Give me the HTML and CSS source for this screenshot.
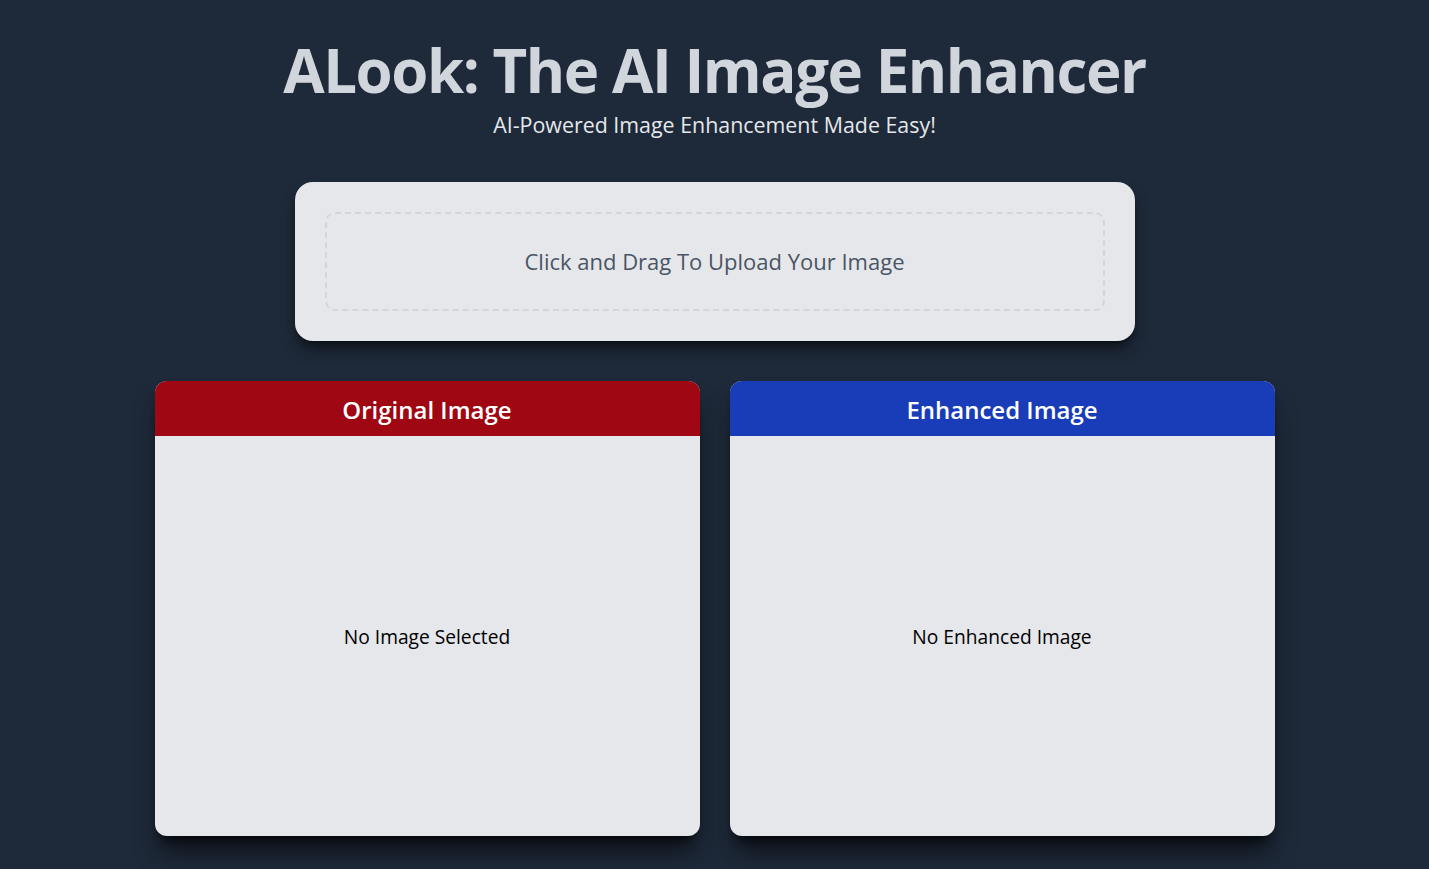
FILE: index.html
```html
<!DOCTYPE html>
<html lang="en">
<head>
<meta charset="utf-8">
<title>ALook: The AI Image Enhancer</title>
<link rel="stylesheet" href="styles.css">
</head>
<body>
<main class="page">
  <header class="hero">
    <h1 class="title">ALook: The AI Image Enhancer</h1>
    <p class="subtitle">AI-Powered Image Enhancement Made Easy!</p>
  </header>

  <section class="upload">
    <label class="dropzone">
      <span class="dropzone-text">Click and Drag To Upload Your Image</span>
    </label>
  </section>

  <section class="previews">
    <div class="card">
      <div class="card-head card-head--red">Original Image</div>
      <div class="card-body">No Image Selected</div>
    </div>
    <div class="card">
      <div class="card-head card-head--blue">Enhanced Image</div>
      <div class="card-body">No Enhanced Image</div>
    </div>
  </section>
</main>
</body>
</html>
```
FILE: styles.css
```css
* { box-sizing: border-box; }

html, body {
  margin: 0;
  padding: 0;
}

body {
  background: #1e2939;
  min-height: 100vh;
  font-family: "Open Sans", "Noto Sans", "Liberation Sans", sans-serif;
}

.page {
  display: flex;
  flex-direction: column;
  align-items: center;
  padding-top: 40px;
}

.hero {
  text-align: center;
}

.title {
  margin: 0;
  font-size: 60px;
  line-height: 60px;
  font-weight: 700;
  color: #d1d5dc;
  letter-spacing: -1.45px;
}

.subtitle {
  margin: 11px 0 0;
  font-size: 21.4px;
  line-height: 28px;
  color: #e5e7eb;
}

.upload {
  margin-top: 43px;
  width: 840px;
  background: #e5e7eb;
  border-radius: 18px;
  padding: 30px;
  box-shadow: 0 10px 15px -3px rgba(0,0,0,0.55), 0 4px 6px -4px rgba(0,0,0,0.55);
}

.dropzone {
  display: flex;
  align-items: center;
  justify-content: center;
  height: 99px;
  padding-bottom: 2px;
  border: 2px dashed #d1d5dc;
  border-radius: 10px;
  cursor: pointer;
}

.dropzone-text {
  font-size: 22px;
  color: #4a5565;
}

.previews {
  margin-top: 40px;
  display: grid;
  grid-template-columns: 545px 545px;
  gap: 30px;
}

.card {
  border-radius: 12px;
  overflow: hidden;
  background: #e5e7eb;
  box-shadow: 0 20px 25px -5px rgba(0,0,0,0.6), 0 8px 10px -6px rgba(0,0,0,0.7);
}

.card-head {
  height: 55px;
  padding-top: 2px;
  display: flex;
  align-items: center;
  justify-content: center;
  color: #ffffff;
  font-size: 24px;
  font-weight: 600;
}

.card-head--red { background: #9f0712; }
.card-head--blue { background: #193cb8; }

.card-body {
  height: 400px;
  display: flex;
  align-items: center;
  justify-content: center;
  font-size: 19.2px;
  color: #000000;
}
```
